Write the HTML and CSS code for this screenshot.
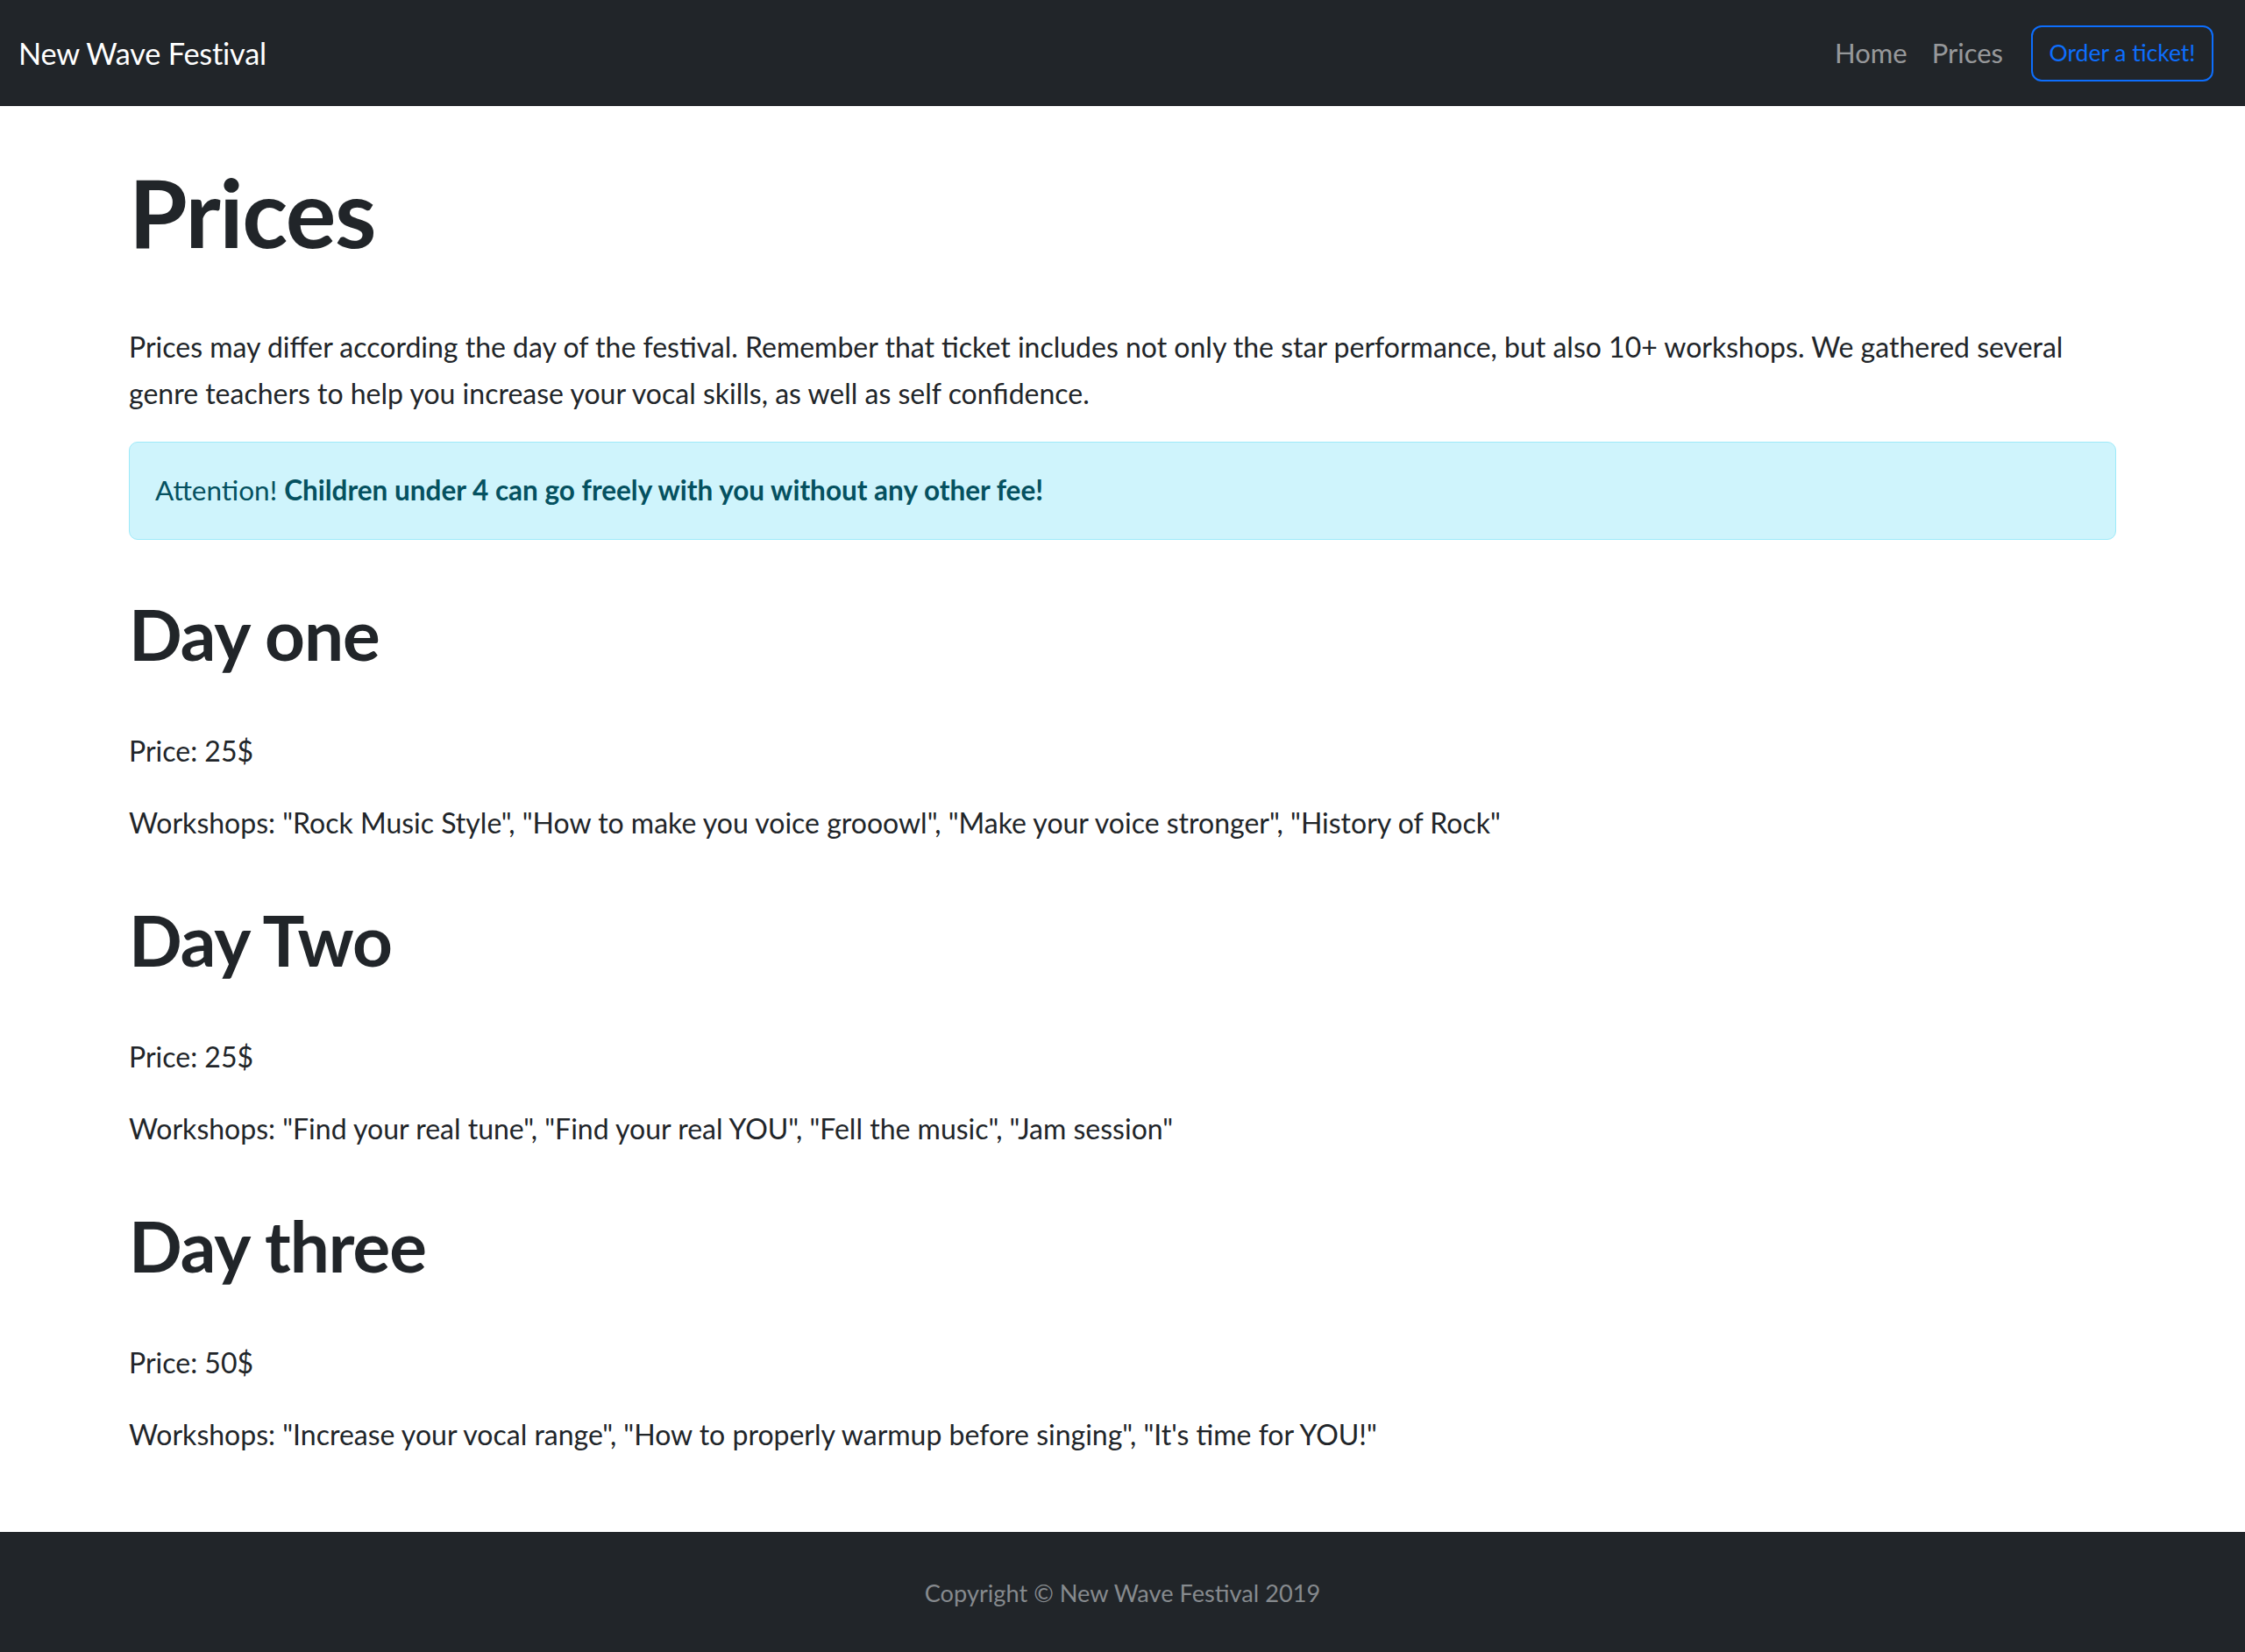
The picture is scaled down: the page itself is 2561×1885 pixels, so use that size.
FILE: index.html
```html
<!DOCTYPE html>
<html lang="en">
<head>
<meta charset="utf-8">
<title>Prices - New Wave Festival</title>
<link rel="stylesheet" href="styles.css">
</head>
<body>
<header class="navbar">
  <a class="brand" href="#">New Wave Festival</a>
  <nav class="nav">
    <a class="nav-link" href="#">Home</a>
    <a class="nav-link" href="#">Prices</a>
    <a class="btn-order" href="#">Order a ticket!</a>
  </nav>
</header>
<main class="container">
  <h1 class="title">Prices</h1>
  <p>Prices may differ according the day of the festival. Remember that ticket includes not only the star performance, but also 10+ workshops. We gathered several genre teachers to help you increase your vocal skills, as well as self confidence.</p>
  <div class="alert">Attention! <strong>Children under 4 can go freely with you without any other fee!</strong></div>
  <section class="day">
    <h2>Day one</h2>
    <p>Price: 25$</p>
    <p>Workshops: "Rock Music Style", "How to make you voice grooowl", "Make your voice stronger", "History of Rock"</p>
  </section>
  <section class="day">
    <h2>Day Two</h2>
    <p>Price: 25$</p>
    <p>Workshops: "Find your real tune", "Find your real YOU", "Fell the music", "Jam session"</p>
  </section>
  <section class="day">
    <h2>Day three</h2>
    <p>Price: 50$</p>
    <p>Workshops: "Increase your vocal range", "How to properly warmup before singing", "It's time for YOU!"</p>
  </section>
</main>
<footer class="footer">
  <p>Copyright © New Wave Festival 2019</p>
</footer>
</body>
</html>
```
FILE: styles.css
```css
* { box-sizing: border-box; }
html, body { margin: 0; padding: 0; }
body {
  font-family: Lato, "Noto Sans", "Liberation Sans", sans-serif;
  color: #212529;
  background: #fff;
  font-size: 32px;
  line-height: 53px;
  min-height: 100vh;
  display: flex;
  flex-direction: column;
}
a { text-decoration: none; }

.navbar {
  height: 121px;
  flex: none;
  background: #212529;
  display: flex;
  align-items: center;
  justify-content: space-between;
  padding: 0 36px 0 21px;
}
.brand {
  color: #fff;
  font-size: 34.3px;
  letter-spacing: -0.2px;
}
.nav {
  display: flex;
  align-items: center;
}
.nav-link {
  color: rgba(255,255,255,0.55);
  font-size: 31px;
  margin-right: 28px;
}
.btn-order {
  display: flex;
  align-items: center;
  justify-content: center;
  width: 208px;
  height: 64px;
  border: 2px solid #0d6efd;
  border-radius: 12px;
  color: #0d6efd;
  font-size: 26.5px;
  margin-left: 4px;
}

.container {
  flex: 1 0 auto;
  padding: 56px 147px 56px;
}
.title {
  font-size: 108px;
  line-height: 1.2;
  font-weight: 700;
  margin: 0 0 62px;
  letter-spacing: -1.5px;
}
p {
  margin: 0 0 29px;
}
.alert {
  background: #cff4fc;
  border: 1px solid #9eeaf9;
  border-radius: 10px;
  color: #055160;
  font-size: 31.5px;
  padding: 28px 29px 29px;
  margin: 0 0 29px;
}
.alert strong { font-weight: 700; }
.day h2 {
  font-size: 80px;
  line-height: 1.2;
  font-weight: 700;
  margin: 59px 0 59px;
  letter-spacing: -1px;
}

.footer {
  flex: none;
  background: #212529;
  height: 139px;
  display: flex;
  align-items: center;
  justify-content: center;
}
.footer p {
  margin: 0;
  color: #868a8e;
  font-size: 27.2px;
}
```
